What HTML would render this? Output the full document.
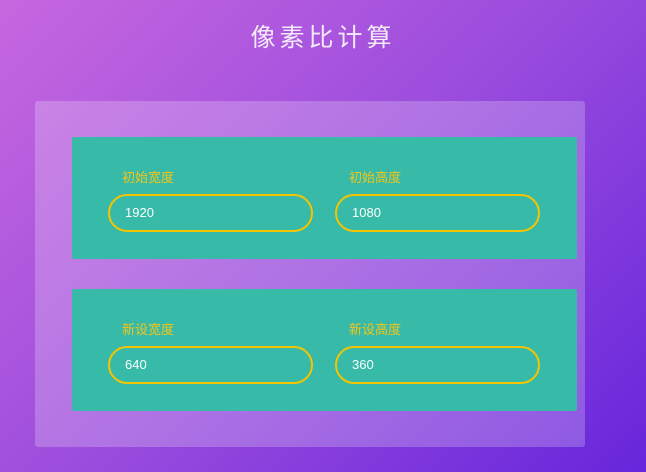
<!DOCTYPE html>
<html><head><meta charset="utf-8"><style>
*{margin:0;padding:0;box-sizing:border-box}
body{width:646px;height:472px;overflow:hidden;background:linear-gradient(135deg,#c767df 0%,#9a4cdd 50%,#6726db 100%);font-family:"Liberation Sans","Noto Sans CJK SC",sans-serif;position:relative}
h1{position:absolute;top:18px;left:0;width:646px;text-align:center;color:#f3eaf8;font-size:25px;font-weight:normal;letter-spacing:4px}
.panel{position:absolute;left:35px;top:101px;width:550px;height:346px;background:rgba(255,255,255,0.22);border-radius:3px}
.card{position:absolute;left:37px;width:505px;height:122px;background:#37bba8;border-radius:2px}
.lab{position:absolute;top:30px;color:#f2c51a;font-size:13px}
.inp{position:absolute;top:57px;width:205px;height:38px;border:2px solid #f5c400;border-radius:19px;color:#fff;font-size:13px;line-height:34px;padding-left:15px}
</style></head><body>
<h1>像素比计算</h1>
<div class="panel">
<div class="card" style="top:36px">
<div class="lab" style="left:50px">初始宽度</div><div class="inp" style="left:36px">1920</div>
<div class="lab" style="left:277px">初始高度</div><div class="inp" style="left:263px">1080</div>
</div>
<div class="card" style="top:188px">
<div class="lab" style="left:50px">新设宽度</div><div class="inp" style="left:36px">640</div>
<div class="lab" style="left:277px">新设高度</div><div class="inp" style="left:263px">360</div>
</div>
</div>
</body></html>
